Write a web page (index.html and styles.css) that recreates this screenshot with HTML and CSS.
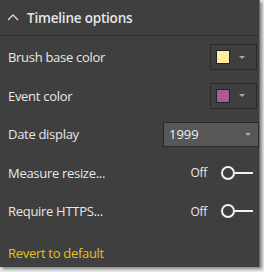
FILE: index.html
```html
<!DOCTYPE html>
<html>
<head>
<meta charset="utf-8">
<link rel="stylesheet" href="styles.css">
</head>
<body>
<div class="panel">
  <div class="header">
    <svg class="chev" width="12" height="8" viewBox="0 0 12 8"><path d="M1 7 L6 2 L11 7" fill="none" stroke="#d8d8d8" stroke-width="1.3"/></svg>
    <span class="title">Timeline options</span>
  </div>
  <div class="rows">
    <div class="row">
      <span class="label">Brush base color</span>
      <div class="picker"><span class="swatch yellow"></span><span class="arrow"></span></div>
    </div>
    <div class="row">
      <span class="label">Event color</span>
      <div class="picker"><span class="swatch purple"></span><span class="arrow"></span></div>
    </div>
    <div class="row">
      <span class="label">Date display</span>
      <div class="select"><span class="value">1999</span><span class="arrow"></span></div>
    </div>
    <div class="row">
      <span class="label">Measure resize...</span>
      <div class="toggle"><span class="off">Off</span><span class="knob"></span><span class="track"></span></div>
    </div>
    <div class="row">
      <span class="label">Require HTTPS...</span>
      <div class="toggle"><span class="off">Off</span><span class="knob"></span><span class="track"></span></div>
    </div>
  </div>
  <div class="revert">Revert to default</div>
</div>
</body>
</html>
```
FILE: styles.css
```css
html, body {
  margin: 0;
  padding: 0;
}
body {
  width: 264px;
  height: 272px;
  background: #ececec;
  overflow: hidden;
  font-family: "Open Sans", "Noto Sans", sans-serif;
}
.panel {
  width: 259px;
  height: 267px;
  background: #3f3f3f;
  border-right: 1px solid #6a6a6a;
  box-shadow: 2px 2px 3px rgba(0,0,0,0.45);
  display: flex;
  flex-direction: column;
  color: #e8e8e8;
}
.header {
  height: 35px;
  border-bottom: 1px solid #2f2f2f;
  display: flex;
  align-items: center;
  padding-left: 7px;
  gap: 8px;
}
.chev {
  display: block;
  margin-top: -2px;
}
.title {
  font-size: 13.5px;
  font-weight: 600;
  letter-spacing: -0.2px;
  color: #e6e6e6;
}
.rows {
  padding-top: 2px;
  display: flex;
  flex-direction: column;
}
.row {
  height: 38.5px;
  display: flex;
  align-items: center;
  justify-content: space-between;
  padding-left: 8px;
  padding-right: 1px;
}
.label {
  font-size: 13px;
  letter-spacing: -0.3px;
  color: #e8e8e8;
}
.picker {
  width: 45px;
  height: 24px;
  border: 1px solid #2a2a2a;
  display: flex;
  align-items: center;
  padding-left: 5px;
  box-sizing: border-box;
  width: 47px;
  height: 26px;
  margin-right: 1px;
  gap: 9px;
}
.swatch {
  width: 12px;
  height: 12px;
  border: 1px solid #222;
}
.yellow { background: #fcee9c; }
.purple { background: #a35c98; }
.arrow {
  width: 0;
  height: 0;
  border-left: 3px solid transparent;
  border-right: 3px solid transparent;
  border-top: 3px solid #a8a8a8;
}
.select {
  box-sizing: border-box;
  width: 96px;
  height: 25px;
  background: #575757;
  border: 1px solid #2a2a2a;
  display: flex;
  align-items: center;
  justify-content: space-between;
  padding: 0 7px 0 5px;
  margin-right: -1px;
}
.value {
  font-size: 13px;
  color: #efefef;
}
.toggle {
  display: flex;
  align-items: center;
  margin-right: 5px;
}
.off {
  font-size: 12px;
  letter-spacing: -0.3px;
  color: #e8e8e8;
  margin-right: 14px;
}
.knob {
  width: 10px;
  height: 10px;
  border: 2px solid #f2f2f2;
  border-radius: 50%;
}
.track {
  width: 18px;
  height: 2px;
  background: #f2f2f2;
}
.revert {
  margin-top: 13px;
  padding-left: 8px;
  font-size: 13px;
  letter-spacing: -0.3px;
  color: #e8c020;
}
```
